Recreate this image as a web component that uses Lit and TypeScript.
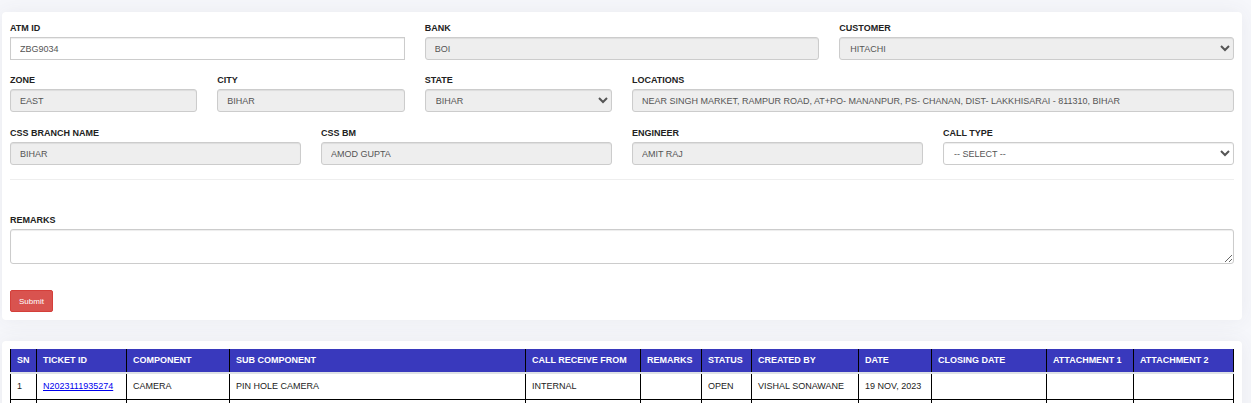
import { LitElement, html, css } from "lit";
import { customElement } from "lit/decorators.js";

interface Field {
  id: string;
  label: string;
  value: string;
  kind: "text" | "select";
  locked: boolean;
  wide?: boolean;
}

interface Column {
  title: string;
  width: number;
}

const siteFields: Field[] = [
  { id: "atm-id", label: "ATM ID", value: "ZBG9034", kind: "text", locked: false },
  { id: "bank", label: "BANK", value: "BOI", kind: "text", locked: true },
  { id: "customer", label: "CUSTOMER", value: "HITACHI", kind: "select", locked: true },
];

const placeFields: Field[] = [
  { id: "zone", label: "ZONE", value: "EAST", kind: "text", locked: true },
  { id: "city", label: "CITY", value: "BIHAR", kind: "text", locked: true },
  { id: "state", label: "STATE", value: "BIHAR", kind: "select", locked: true },
  {
    id: "locations",
    label: "LOCATIONS",
    value: "NEAR SINGH MARKET, RAMPUR ROAD, AT+PO- MANANPUR, PS- CHANAN, DIST- LAKKHISARAI - 811310, BIHAR",
    kind: "text",
    locked: true,
    wide: true,
  },
];

const staffFields: Field[] = [
  { id: "branch", label: "CSS BRANCH NAME", value: "BIHAR", kind: "text", locked: true },
  { id: "bm", label: "CSS BM", value: "AMOD GUPTA", kind: "text", locked: true },
  { id: "engineer", label: "ENGINEER", value: "AMIT RAJ", kind: "text", locked: true },
  { id: "call-type", label: "CALL TYPE", value: "-- SELECT --", kind: "select", locked: false },
];

// Widths are relative weights shared out over the table.
const columns: Column[] = [
  { title: "SN", width: 26 },
  { title: "TICKET ID", width: 90 },
  { title: "COMPONENT", width: 103 },
  { title: "SUB COMPONENT", width: 296 },
  { title: "CALL RECEIVE FROM", width: 115 },
  { title: "REMARKS", width: 61 },
  { title: "STATUS", width: 50 },
  { title: "CREATED BY", width: 107 },
  { title: "DATE", width: 73 },
  { title: "CLOSING DATE", width: 115 },
  { title: "ATTACHMENT 1", width: 87 },
  { title: "ATTACHMENT 2", width: 100 },
];

const totalWidth = columns.reduce((sum, c) => sum + c.width, 0);

const tickets: string[][] = [
  ["1", "N2023111935274", "CAMERA", "PIN HOLE CAMERA", "INTERNAL", "", "OPEN", "VISHAL SONAWANE", "19 NOV, 2023", "", "", ""],
  ["", "", "", "", "", "", "", "", "", "", "", ""],
];

@customElement("ticket-form")
class TicketForm extends LitElement {
  static styles = css`
    :host {
      display: block;
    }
    .row {
      display: grid;
      gap: 20px;
    }
    .thirds {
      grid-template-columns: repeat(3, 1fr);
      margin-bottom: 13px;
    }
    .sixths {
      grid-template-columns: repeat(6, 1fr);
      margin-bottom: 14px;
    }
    .quarters {
      grid-template-columns: repeat(4, 1fr);
    }
    .field {
      display: flex;
      flex-direction: column;
      min-width: 0;
    }
    .wide {
      grid-column: span 3;
    }
    .label {
      font-size: 9px;
      line-height: 14px;
      font-weight: bold;
      color: #222222;
      padding-bottom: 2px;
    }
    .control {
      box-sizing: border-box;
      width: 100%;
      height: 23px;
      margin: 0;
      padding: 0 9px;
      font-family: inherit;
      font-size: 9px;
      color: #555555;
      background: #ffffff;
      border: 1px solid #cccccc;
      border-radius: 3px;
      box-shadow: inset 0 1px 1px rgba(0, 0, 0, 0.075);
      opacity: 1;
    }
    .control:read-only:not(select) {
      background: #eeeeee;
    }
    .control:disabled {
      background: #eeeeee;
    }
    .select {
      padding: 0 6px;
    }
    .square {
      border-radius: 0;
    }
    .divider {
      border: 0;
      border-top: 1px solid #eeeeee;
      margin: 14px 0 33px;
    }
    .remarks {
      height: 35px;
      resize: vertical;
    }
    .submit {
      display: block;
      height: 22px;
      margin: 26px 0 0;
      padding: 0 8px;
      font-family: inherit;
      font-size: 8px;
      color: #ffffff;
      background: #d9534f;
      border: 1px solid #d43f3a;
      border-radius: 2px;
    }
  `;

  private renderField(f: Field) {
    return html`
      <div class="field ${f.wide ? "wide" : ""}">
        <label class="label" for=${f.id}>${f.label}</label>
        ${f.kind === "select"
          ? html`<select class="control select" id=${f.id} ?disabled=${f.locked}>
              <option>${f.value}</option>
            </select>`
          : html`<input
              class="control ${f.locked ? "" : "square"}"
              id=${f.id}
              type="text"
              .value=${f.value}
              ?readonly=${f.locked}
            />`}
      </div>
    `;
  }

  render() {
    return html`
      <form @submit=${(e: Event) => e.preventDefault()}>
        <div class="row thirds">${siteFields.map((f) => this.renderField(f))}</div>
        <div class="row sixths">${placeFields.map((f) => this.renderField(f))}</div>
        <div class="row quarters">${staffFields.map((f) => this.renderField(f))}</div>
        <hr class="divider" />
        <div class="field">
          <label class="label" for="remarks">REMARKS</label>
          <textarea class="control remarks" id="remarks"></textarea>
        </div>
        <button class="submit" type="submit">Submit</button>
      </form>
    `;
  }
}

@customElement("ticket-table")
class TicketTable extends LitElement {
  static styles = css`
    :host {
      display: block;
    }
    .table {
      width: 100%;
      table-layout: fixed;
      border-collapse: collapse;
      font-size: 9px;
      line-height: 13px;
      color: #222222;
    }
    .head,
    .cell {
      height: 26px;
      box-sizing: border-box;
      padding: 0 0 0 6px;
      text-align: left;
      white-space: nowrap;
      border: 1px solid #000000;
    }
    .head {
      height: 24px;
      color: #ffffff;
      background: #3939bd;
      border-top: 0;
      border-bottom: 2px solid #dee2e6;
    }
    .link {
      color: #0000ee;
      text-decoration: underline;
    }
  `;

  render() {
    return html`
      <table class="table">
        <colgroup>
          ${columns.map((c) => html`<col style="width: ${(c.width / totalWidth) * 100}%" />`)}
        </colgroup>
        <thead>
          <tr>
            ${columns.map((c) => html`<th class="head" scope="col">${c.title}</th>`)}
          </tr>
        </thead>
        <tbody>
          ${tickets.map(
            (row) => html`<tr>
              ${row.map(
                (text, i) => html`<td class="cell">${i === 1 && text ? html`<a class="link" href="#">${text}</a>` : text}</td>`
              )}
            </tr>`
          )}
        </tbody>
      </table>
    `;
  }
}

@customElement("app-root")
class AppRoot extends LitElement {
  static styles = css`
    :host {
      display: block;
      box-sizing: border-box;
      min-height: 100vh;
      padding: 12px 9px 0 2px;
      font-family: "Liberation Sans", Arial, sans-serif;
      background: #f6f7fb;
    }
    .card {
      background: #ffffff;
      border-radius: 4px;
      box-shadow: 0 0 20px rgba(69, 65, 78, 0.07);
      padding: 9px 8px 8px;
      margin-bottom: 21px;
    }
    .last {
      padding-top: 8px;
      margin-bottom: 0;
    }
  `;

  render() {
    return html`
      <div class="card"><ticket-form></ticket-form></div>
      <div class="card last"><ticket-table></ticket-table></div>
    `;
  }
}
